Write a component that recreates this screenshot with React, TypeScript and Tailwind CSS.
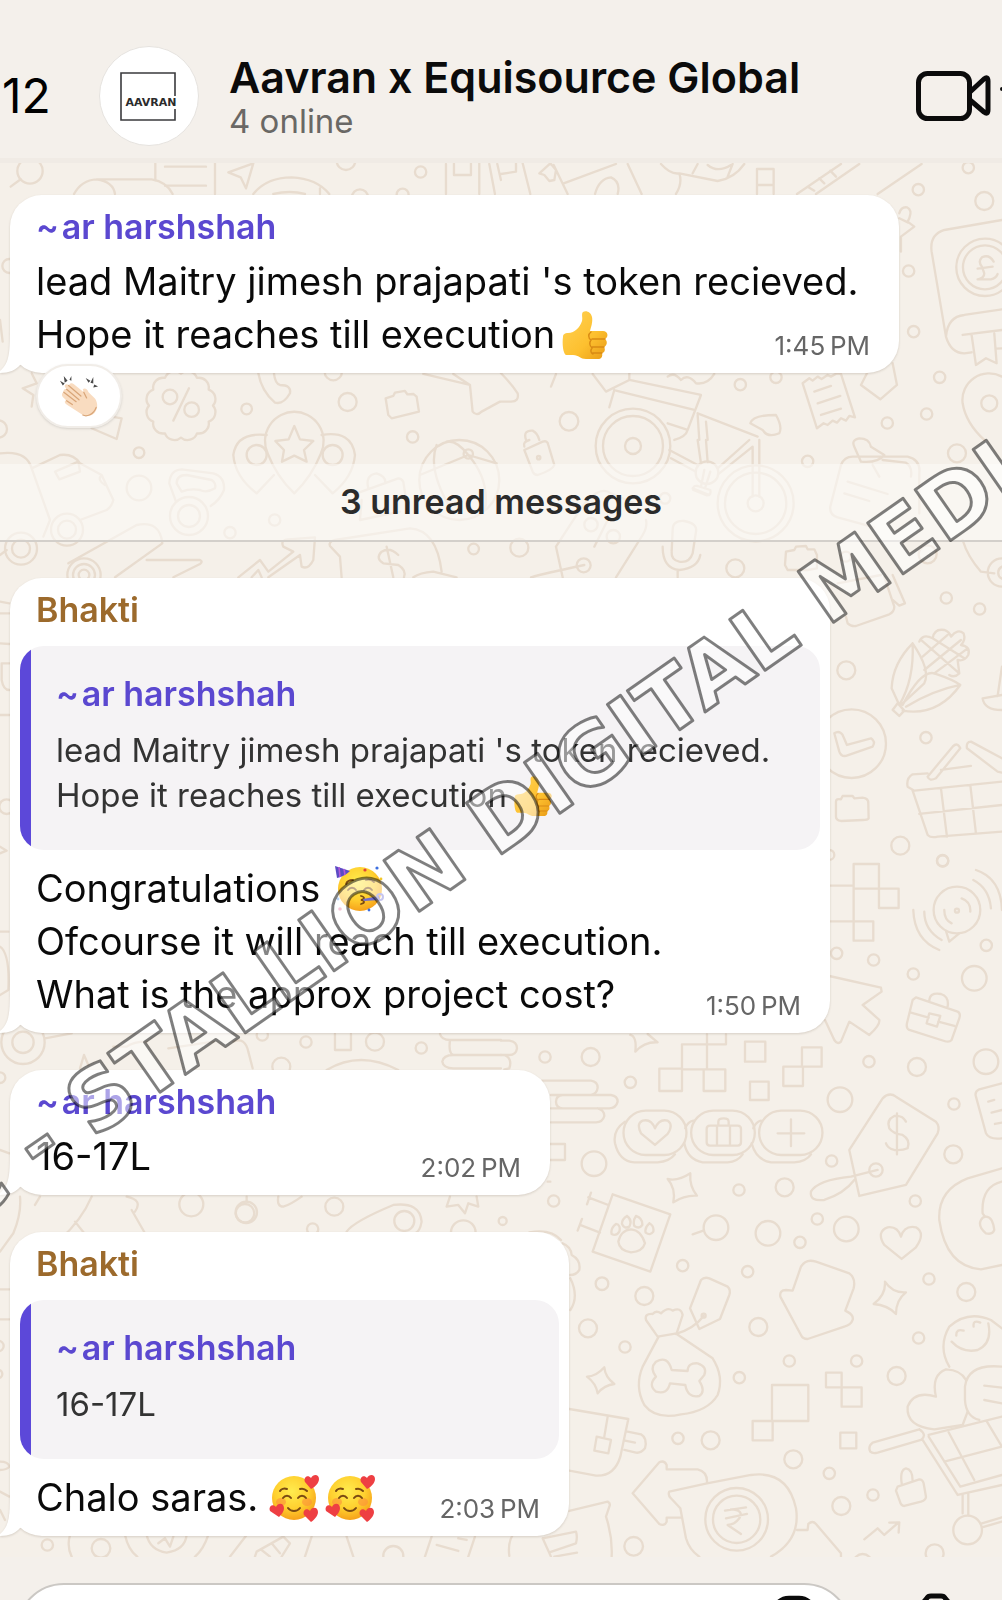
import type { ReactNode } from 'react'

type Circle = [number, number, number]

interface Doodle {
  x: number
  y: number
  circles: Circle[]
  paths: string[]
}

// Wallpaper line art. Each group is drawn at 3x and scaled down in place.
const doodles: Doodle[] = [
  {
    x: 0,
    y: 0,
    circles: [[90, 513, 38], [1262, 516, 17], [1038, 482, 28], [1080, 592, 24], [1208, 584, 18], [28, 798, 21], [510, 1191, 22], [575, 1229, 22], [740, 1227, 16], [1043, 1206, 27], [-5, 1287, 26], [1000, 1115, 26], [1238, 1311, 17]],
    paths: [
      'M62 538L32 560M466 490V540M495 500H618M495 557H618M645 490V582M685 517L760 490L738 565L722 532Z',
      'M222 582Q245 540 290 538H455Q500 545 518 582M290 538Q340 545 345 582M760 582Q800 532 875 532Q950 535 988 582M960 565V582M820 582Q870 570 915 582',
      'M1338 492V582M1362 490V525H1413V490M1438 490V582M1468 492L1485 582M1492 492L1503 540M0 960L8 1025',
      'M95 1120L110 1150L68 1165L100 1185L95 1220M275 1285L350 1317L365 1255L335 1250M520 1262L567 1165',
      'M775 1120Q785 1175 825 1208Q850 1215 870 1180Q875 1155 840 1155Q825 1150 822 1120',
      'M1157 1195L1180 1188L1185 1178L1215 1173L1222 1183L1240 1182L1250 1190L1257 1235L1175 1255L1165 1245Z',
      'M1270 1122L1410 1155L1418 1235Q1430 1250 1445 1235L1500 1205M1360 1122L1410 1155',
    ],
  },
  {
    x: 501,
    y: 0,
    circles: [[1402, 503, 17], [1252, 569, 17], [1450, 603, 27], [1223, 813, 17], [1238, 995, 17], [1316, 1132, 17], [718, 1154, 17], [825, 1132, 17], [204, 1264, 28], [1159, 1269, 17], [1277, 1242, 17], [1452, 802, 86], [1452, 802, 66], [1465, 1210, 24]],
    paths: [
      'M0 522L45 515V490M65 490L88 582M115 520L148 490L165 510L160 540L145 543L130 525ZM158 495L200 582M188 550L345 492M380 492L422 582M282 582Q295 535 330 532Q360 545 350 582',
      'M480 492Q510 525 535 520Q545 550 525 582M535 520L650 543Q700 535 730 492M575 520L590 492M680 530L695 492M620 495Q650 520 690 495M768 582V507H818V582M768 555H818',
      'M888 582L1020 492M945 582L1075 492M920 560L940 572M955 535L970 550M988 512L1005 530M1130 582L1262 492',
      'M1195 640Q1200 620 1218 622Q1235 630 1225 655L1220 665L1240 680L1200 710V755M1195 655L1222 668',
      'M1503 660L1330 690Q1285 705 1292 755L1335 1010Q1350 1060 1390 1060L1412 1057M1484 1046L1503 1045M1335 1010Q1340 950 1390 945L1503 928M1385 1005L1503 990M1412 1005L1425 1095L1455 1075L1487 1090L1480 1000',
      'M1478 785Q1465 762 1443 772Q1430 785 1443 800L1450 820Q1450 835 1430 838H1470Q1485 835 1490 822M1430 806L1475 800',
      'M905 1150L925 1135L935 1142L950 1130L962 1137L980 1125L990 1130L1008 1120L1020 1122L1062 1252L1045 1248L1035 1262L1020 1255L1008 1268L995 1262L980 1275L968 1270L948 1285ZM940 1175L990 1158M950 1210L1018 1188M960 1245L1020 1226',
      'M1098 1120L1080 1155L1138 1198L1188 1155L1175 1090M1503 1130A80 80 0 0 0 1385 1210Q1395 1270 1450 1320',
      'M275 1122L315 1175L385 1140L600 1185L560 1290Q555 1310 520 1320M385 1120V1140M340 1170L325 1222M345 1172L580 1230M500 1270L560 1290M150 1160L165 1122M500 1130Q520 1115 540 1140Q560 1120 585 1150Q620 1155 640 1122',
      'M748 1270Q755 1245 825 1245Q845 1280 835 1300Q800 1315 785 1290ZM590 1245L595 1320M615 1265L620 1320M590 1240L770 1310M75 1320Q65 1290 95 1292Q110 1300 115 1320M0 1120Q30 1150 50 1180Q55 1205 30 1205H0',
    ],
  },
  {
    x: 0,
    y: 440,
    circles: [[417, 38, 16], [417, 144, 37], [824, 240, 17], [690, 278, 17], [770, 45, 30], [998, 45, 30], [1421, 327, 16], [567, 228, 57], [567, 228, 33], [201, 269, 48], [201, 269, 27], [63, 326, 48], [63, 326, 27], [252, 405, 50], [252, 405, 33], [252, 405, 16], [1378, 120, 120], [1405, 42, 14], [20, 1100, 22]],
    paths: [
      'M803 40Q830 110 883 160Q935 110 963 40A88 88 0 1 0 803 40M883 -42L900 -2L940 3L912 30L920 65L883 47L846 65L852 30L826 3L866 -2Z',
      'M800 -15Q710 -25 700 45Q705 110 770 160L822 105M965 -15Q1055 -30 1065 45Q1060 110 998 160L945 105',
      'M0 40Q80 30 95 85L150 240L130 290M95 85L180 45Q220 40 240 70L305 105L340 180Q335 200 320 210L240 240M165 95L235 65L240 95L178 118ZM305 105Q290 120 315 135M0 345L20 330',
      'M528 185L508 130Q510 90 545 88L640 100Q675 110 672 150Q660 180 632 198M530 130Q530 105 560 105L635 120Q650 130 645 145Q620 160 600 150Q570 145 545 155Z',
      'M205 370L410 255Q480 240 487 310L345 412M440 360H600Q610 365 600 372L520 412',
      'M715 412L780 360L805 395L880 335L850 320Q840 300 865 298L945 292L940 360Q925 390 905 380L900 345L805 412M755 412L775 390L785 412',
      'M1025 412L1020 350L990 318Q985 305 1005 300L1230 265Q1310 270 1325 395M1240 412Q1260 398 1300 395L1370 412M1160 320L1180 412M1195 345Q1170 320 1145 335Q1125 355 1150 370L1195 375Q1220 390 1212 412',
      'M1070 160L1195 115Q1205 115 1210 125L1220 190M1085 180L1080 240L1200 215M1105 145Q1095 105 1130 100Q1160 110 1155 130',
      'M1310 15Q1280 90 1360 220M1405 45L1260 105M1405 45L1490 70M1405 45Q1470 120 1455 210M1405 45Q1370 0 1340 5',
      'M0 485L28 490M0 520H28M0 610L28 612M5 670V720Q10 750 28 750M5 670H28M0 825H28M0 1220L20 1232L0 1240',
    ],
  },
  {
    x: 501,
    y: 440,
    circles: [[396, 18, 112], [396, 18, 90], [396, 18, 24], [764, 190, 114], [764, 190, 92], [764, 190, 24], [618, 98, 34], [920, 64, 17], [1368, 40, 27], [492, 175, 16], [270, 254, 20], [337, 290, 20], [55, 323, 27], [248, 376, 21], [703, 385, 27], [113, 53, 5], [1336, 474, 17], [1436, 507, 17], [1036, 691, 27], [1052, 911, 103], [1275, 893, 17], [1198, 1217, 27], [1280, 343, 27], [1325, 1262, 17], [985, 1245, 15], [1035, 350, 15]],
    paths: [
      'M70 20Q65 5 85 0M70 30L125 5Q140 0 142 15L160 75Q155 90 110 105Q100 105 95 95Z',
      'M505 30L590 75M510 55L585 95M590 0L600 70M615 0L620 66M650 85L745 0M655 100L755 20V170M775 0V170M610 90L600 140M628 95L612 145M575 145L625 165M577 150Q575 135 590 138L628 150Q632 165 618 166Z',
      'M1055 50Q1030 50 1020 75L988 200Q985 225 1010 232L1120 262M1055 50H1220Q1260 60 1255 100V220M1040 125L1160 162M1030 160L1105 183M1145 60L1215 68Q1235 80 1230 110M1060 20Q1050 0 1075 -5Q1105 -5 1110 20L1150 45Q1130 70 1080 65ZM1115 75L1135 110',
      'M165 320L230 220M435 240Q440 260 425 285L345 412M165 320L185 412M90 412Q130 400 250 375M280 320L320 240M230 220Q290 130 330 160L400 190',
      'M515 270Q515 240 550 243Q590 250 585 275L575 340Q565 370 535 365Q510 360 512 335ZM485 320Q485 385 535 390Q590 385 598 345M530 390V412',
      'M855 335L880 330L885 320L915 318L920 328L940 328L948 345V385L920 390H860L852 375Z',
      'M1035 530L1040 550Q1050 560 1065 558L1165 523Q1180 515 1180 500L1150 410M1010 430L1140 405M1175 405L1212 490L1195 497L1175 480',
      'M1385 300Q1400 350 1440 395L1480 400M1503 355A42 42 0 0 0 1503 440M1503 380A20 20 0 0 0 1503 416',
      'M1235 610Q1175 670 1172 745L1195 795M1235 610Q1290 690 1270 730L1200 795M1235 610Q1240 720 1195 795M1205 795Q1260 690 1300 700Q1360 720 1378 735Q1310 830 1205 812M1378 735Q1300 750 1215 800M1190 790L1175 810L1195 828L1210 812Z',
      'M1255 605Q1265 580 1295 595Q1300 565 1330 570Q1345 575 1350 590Q1370 565 1388 580Q1395 600 1380 615Q1410 620 1402 645Q1390 665 1370 660L1375 700Q1360 715 1345 705M1260 600L1375 700M1295 595L1390 655M1265 650L1340 585M1270 690L1380 600M1300 700L1400 625',
      'M1445 775L1503 765M1445 775Q1450 810 1503 810M1490 768L1503 680',
      'M1000 880Q1015 870 1025 885L1038 915L1110 895Q1125 905 1115 920L1035 948Q1020 950 1015 935Z',
      'M1005 1085Q1005 1075 1020 1078L1025 1068H1055L1060 1075L1085 1073Q1103 1075 1102 1090L1103 1135Q1100 1140 1085 1140L1020 1143Q1005 1140 1005 1130Z',
      'M1410 978L1320 990M1280 1010L1355 920Q1370 905 1378 925L1305 1015Q1285 1025 1280 1010M1503 955L1410 905Q1395 905 1398 925L1490 995L1503 998M1280 1000L1235 1003Q1215 1015 1220 1040L1240 1052L1503 1025M1235 1052L1280 1185Q1290 1195 1310 1190L1503 1175M1320 1045L1338 1190M1408 1035L1425 1180M1255 1122L1503 1095',
    ],
  },
  {
    x: 501,
    y: 860,
    circles: [[1368, 150, 70], [1368, 152, 6], [1325, 3, 17], [1007, 280, 17], [1118, 300, 17], [1237, 342, 17], [1420, 355, 37], [1456, 256, 17], [1455, 605, 37], [1248, 621, 27], [1104, 605, 17], [132, 591, 17], [269, 591, 27], [388, 667, 17], [1017, 719, 37], [1359, 732, 17], [1357, 883, 27], [279, 911, 37], [992, 903, 17], [714, 990, 17], [851, 982, 27], [158, 1023, 17], [1243, 1023, 17], [1125, 930, 20], [949, 1077, 17], [1036, 1107, 37], [645, 1103, 37], [801, 1120, 37], [5, 1083, 12]],
    paths: [
      'M1058 12H1134V86H1058ZM1134 86H1193V144H1134ZM988 77H1058M1058 86V184M988 184H1058M1058 184H1117V242H1058Z',
      'M1237 150Q1240 240 1315 270M1270 155Q1270 210 1322 240M1417 60Q1465 85 1470 145M1425 30Q1500 55 1503 150M1330 150Q1330 180 1352 190M1382 115Q1410 125 1408 155M1335 213L1345 245L1375 220',
      'M985 348L1140 383L1142 395L1085 435L1135 480Q1138 495 1105 525L1045 485L1020 545Q1010 555 1000 540L972 480',
      'M1245 412L1370 455Q1380 460 1375 475L1352 540Q1345 548 1330 543L1225 510Q1215 505 1218 490L1235 420ZM1285 425Q1285 395 1320 402Q1345 410 1340 440M1230 458L1283 473M1312 485L1360 498M1285 460L1318 468L1308 500L1277 490Z',
      'M388 525Q408 530 403 575Q430 545 470 547L440 522',
      'M543 553H618V628H543ZM475 626H543V693H475ZM608 628H673V693H608ZM618 523V628M618 553H675V523M732 545H793V605H732ZM903 562H962V620H903ZM847 620H906V678H847ZM747 665H803V720H747Z',
      'M0 542H25Q48 545 48 565Q45 585 25 585H0M10 585Q35 595 25 625L10 628M120 662H270Q290 665 290 683Q288 702 270 705M185 705H330Q350 708 350 725Q345 745 325 745H185Q165 743 165 725Q165 707 185 705M290 745Q310 750 310 768Q305 787 285 787H150M150 705H185M150 745H185M148 852H192V900H148M140 965H148',
      'M434 752H490A66 66 0 0 1 490 885H434A66 66 0 0 1 434 752M637 752H695A66 66 0 0 1 695 885H637A66 66 0 0 1 637 752M841 752H898A66 66 0 0 1 898 885H841A66 66 0 0 1 841 752',
      'M372 785Q335 810 342 850Q355 905 400 907H470Q505 905 522 883M577 782Q560 785 553 805M550 850Q560 900 605 907H680Q710 905 725 883M780 782Q765 785 757 805M752 850Q765 900 810 907H880Q915 905 930 883',
      'M462 855L420 820Q405 790 425 782Q450 775 462 805Q475 775 500 782Q518 795 500 822ZM627 797H710Q720 797 720 807V847Q720 857 710 857H627Q617 857 617 847V807Q617 797 627 797M648 797V857M687 797V857M652 797V785Q652 775 668 775Q683 775 683 785V797M830 820H910M870 778V858',
      'M1045 870L1145 715Q1165 695 1185 710L1305 785Q1318 800 1310 820L1215 975L1075 1008ZM1130 930L1050 950Q950 960 930 995Q925 1025 970 1020Q1030 1000 1060 960',
      'M1188 760V883M1215 785Q1205 765 1180 768Q1155 780 1165 805Q1175 820 1205 825Q1230 840 1220 865Q1205 872 1180 870Q1160 865 1155 850',
      'M1503 670L1435 688Q1420 695 1425 710L1455 820Q1465 840 1503 835M1462 725L1480 720M1472 758L1503 750M1482 792L1503 788',
      'M1503 925L1400 955Q1310 990 1315 1080Q1335 1220 1440 1228L1503 1215M1503 965Q1440 980 1445 1060L1452 1070M1455 1070Q1475 1070 1480 1110Q1475 1125 1455 1120Q1430 1100 1440 1080Q1445 1070 1455 1070',
      'M500 957Q530 965 568 940Q565 980 588 1007Q550 1005 517 1027Q525 985 500 957Z',
      'M335 1003L508 1063L448 1235L275 1175ZM258 1033L270 998M262 1012L322 1035M230 1112L243 1077M237 1095L297 1118M390 1108Q420 1110 432 1150Q425 1175 390 1177Q355 1172 352 1145Q360 1110 390 1108M345 1092Q360 1095 355 1115Q345 1130 332 1122Q328 1105 345 1092M378 1068Q395 1080 385 1100Q370 1108 363 1092Q362 1078 378 1068M405 1068Q425 1075 424 1095Q415 1108 400 1098Q395 1082 405 1068M445 1090Q460 1098 457 1115Q448 1128 434 1118Q430 1103 445 1090',
      'M1202 1197L1150 1155Q1125 1115 1160 1102Q1190 1098 1200 1130Q1210 1095 1245 1102Q1275 1120 1245 1162ZM575 1123L607 1112',
    ],
  },
  {
    x: 0,
    y: 860,
    circles: [[69, 547, 65], [69, 547, 32], [0, 653, 16], [787, 525, 17], [918, 546, 17], [1125, 545, 27], [1264, 564, 17], [844, 620, 27], [574, 1033, 36], [739, 1057, 32], [1003, 1040, 27], [1213, 1083, 30], [938, 1107, 17], [1390, 1118, 37]],
    paths: [
      'M0 215H25M0 260Q30 280 25 390L0 405M0 870L28 880M135 535L215 520M240 625L252 585L265 615M340 560H380Q400 545 440 545M700 545Q735 530 745 575L758 625M505 565L640 545M980 630Q1080 570 1195 630M1005 522V570H1053V522',
      'M1320 522Q1325 540 1350 540H1503M1350 540Q1345 580 1360 585H1503M1360 585Q1330 585 1327 605Q1330 625 1360 625H1503',
      'M60 1010Q65 1060 40 1120L0 1175M275 1010Q245 1080 180 1139M225 1085L265 1135M380 1010Q430 1020 405 1055M395 1050L435 1120M105 1035L120 1010M1040 1115Q1060 1085 1180 1035Q1260 1025 1265 1085Q1260 1115 1245 1120M740 1025V1010M835 1010Q830 1040 850 1040Q870 1035 905 1010M1350 1010L1340 1040L1375 1035L1395 1060L1405 1030L1435 1040L1430 1010',
    ],
  },
  {
    x: 0,
    y: 1220,
    circles: [[142, 975, 17], [303, 985, 28], [1180, 1008, 30], [-5, 378, 16], [-5, 462, 12], [735, -20, 28]],
    paths: [
      'M0 208H28M0 298H28M0 725Q25 725 28 740Q20 750 0 750M0 815L28 830M0 870L15 900M210 945Q200 980 215 1010M375 945Q385 990 412 1010M585 1010Q610 990 625 945M440 945Q450 990 500 998Q555 990 560 945M475 970L495 955L510 980L520 950',
      'M690 1010L740 945M765 1010L770 995L850 950L870 970L845 1010M785 990L810 1010M815 970L840 1000M915 1010L935 950M1040 950L1060 1010M1275 1010L1295 950M1310 975L1375 993M1405 1010L1425 950M1375 955L1400 960',
    ],
  },
  {
    x: 501,
    y: 1220,
    circles: [[545, 137, 17], [740, 155, 17], [303, 191, 19], [430, 228, 27], [261, 325, 27], [372, 381, 17], [772, 321, 27], [715, 473, 17], [865, 423, 17], [1067, 423, 17], [1187, 468, 27], [1253, 354, 17], [1284, 177, 17], [1396, 216, 27], [897, 67, 17], [531, 655, 17], [629, 661, 27], [877, 718, 27], [985, 760, 17], [1021, 858, 27], [1116, 825, 17], [707, 898, 94], [707, 898, 71], [398, 979, 28], [1301, 1000, 27], [1400, 930, 43], [608, 287, 6], [1085, 1030, 28]],
    paths: [
      'M185 70Q210 80 212 105Q240 120 235 150Q225 165 208 165M208 175Q235 230 208 270M85 37Q150 25 180 60',
      'M875 212L900 140Q915 115 945 125L1045 160Q1065 175 1058 205L1033 272Q1060 285 1055 300Q1050 315 1030 320L920 357Q905 357 900 345L838 230Q835 210 855 210Z',
      'M567 265L600 180Q610 170 625 175L680 200Q690 210 685 225L657 297L595 327ZM525 342Q580 325 608 288',
      'M470 350L435 300Q430 280 455 282Q465 270 480 280Q500 260 515 272Q540 260 545 285L527 340ZM473 350L425 440Q400 500 430 555Q465 600 540 583Q620 575 650 525Q670 470 635 415L527 342',
      'M512 450L560 453Q560 428 590 430Q620 440 610 465L595 483Q615 515 595 528Q560 535 553 495L507 490Q500 525 465 515Q440 495 465 470Q445 445 465 425Q500 405 512 450Z',
      'M258 470Q285 470 310 442Q312 470 340 492Q310 495 290 520Q285 490 258 470ZM1152 185Q1175 220 1215 217Q1185 240 1185 282Q1160 255 1118 252Q1155 225 1152 185Z',
      'M813 495H922V603H813ZM755 603H815V661H755ZM975 458H1022V502H975ZM1022 502H1082V560H1022ZM1018 638H1066V685H1018Z',
      'M205 567L382 597L358 710Q340 770 285 767L205 752M320 590L310 650M287 650L330 660L322 700L280 692ZM380 635L420 643Q440 655 432 685Q420 700 405 698L370 690M372 662L402 668',
      'M618 788Q620 755 590 748H497V735Q490 720 475 727L395 820L475 912Q490 920 497 905V893H540M618 790L505 815Q500 825 510 835L538 865L555 955Q565 990 595 1010M618 790L750 765Q860 750 885 865Q900 960 810 1010',
      'M672 872L735 862M675 895L738 882M690 868Q730 870 715 895Q700 915 680 915L720 942M888 930H920L922 912Q935 900 945 912L1020 1000V1010',
      'M205 873L320 845Q330 850 325 860L315 890Q335 950 332 1010M125 955L225 935Q230 950 225 970L145 997M125 955L150 1010M160 1010L228 998M35 945Q20 970 25 1008',
      'M1090 958L1130 925L1150 945L1192 908M1165 908L1195 907L1193 938',
      'M1190 800L1255 778Q1265 778 1268 790L1275 830Q1275 840 1260 845L1210 858Q1200 857 1197 845L1185 812ZM1203 795Q1195 750 1215 745Q1235 748 1235 782',
      'M1255 628L1115 668Q1100 680 1108 695Q1115 702 1130 698L1260 660Q1280 645 1255 628M1265 660L1370 825L1503 795M1283 650L1378 800L1503 765M1283 645L1503 590M1330 725L1503 680M1343 637L1420 780M1458 605L1503 680M1385 825V880M1402 822V885M1443 910L1503 892M1443 922L1503 905',
      'M1345 440Q1310 380 1345 320Q1400 270 1470 300L1503 325M1352 365Q1385 400 1430 390Q1475 370 1462 310M1366 347Q1365 325 1388 332M1418 320Q1415 298 1438 308M1503 440Q1400 430 1392 500V540Q1395 590 1435 600M1450 497L1503 503M1450 540L1503 550',
      'M1300 628Q1215 620 1220 560Q1240 510 1305 530Q1290 465 1335 448Q1380 450 1395 480M1400 575L1385 615L1300 628',
    ],
  },
]

// Scalloped outline of the percent badge
function scallop(cx: number, cy: number, r: number, n: number) {
  const pts = Array.from({ length: n + 1 }, (_, i) => {
    const a = (i / n) * Math.PI * 2
    return `${(cx + r * Math.cos(a)).toFixed(1)} ${(cy + r * Math.sin(a)).toFixed(1)}`
  })
  return `M${pts[0]}` + pts.slice(1).map((p) => `A30 30 0 0 1 ${p}`).join('')
}

function Wallpaper() {
  return (
    <svg
      aria-hidden="true"
      className="absolute inset-0 h-full w-full"
      viewBox="0 163 1002 1394"
      preserveAspectRatio="xMinYMin slice"
      fill="none"
      stroke="#e8dccf"
      strokeWidth="7"
      strokeLinecap="round"
      strokeLinejoin="round"
    >
      {doodles.map((d, i) => (
        <g key={i} transform={`translate(${d.x} ${d.y}) scale(0.3333)`}>
          {d.circles.map(([cx, cy, r], j) => (
            <circle key={j} cx={cx} cy={cy} r={r} />
          ))}
          {d.paths.map((p, j) => (
            <path key={j} d={p} />
          ))}
        </g>
      ))}
      <path transform="scale(0.3333)" d={scallop(543, 1217, 96, 12)} />
    </svg>
  )
}

function ThumbsUp({ className }: { className: string }) {
  return (
    <svg role="img" aria-label="thumbs up" viewBox="0 0 48 50" className={className}>
      <defs>
        <linearGradient id="thumb" x1="0" y1="0" x2="1" y2="1">
          <stop offset="0" stopColor="#ffd255" />
          <stop offset=".6" stopColor="#fdc02f" />
          <stop offset="1" stopColor="#e89a16" />
        </linearGradient>
      </defs>
      <path
        d="M2 27C2 24 4 23 7 23C14 23 19 17 21 11C22 8 20 4 22 2C25 0 30 2 31 7C32 12 30 17 29 21H42C47 21 48 27 44 29C47 31 46 36 43 37C45 40 43 43 41 43C42 47 40 49 37 49H25C19 49 18 45 12 45H5C2 44 1 33 2 27Z"
        fill="url(#thumb)"
      />
      <path d="M44 29H31M43 37H31M41 43H32M30 22C27 24 27 28 30 30C28 33 29 36 31 38C29 41 30 43 32 44" fill="none" stroke="#d98a14" strokeWidth="1.4" strokeLinecap="round" />
    </svg>
  )
}

function ClappingHands() {
  return (
    <svg role="img" aria-label="clapping hands" viewBox="0 0 42 44" className="h-11 w-10">
      <g fill="#4b4b4b">
        <path d="M1 6L6 9L4 11ZM5 1L9 6L6 8ZM13 1L13 6L11 5ZM28 3L33 6L31 8ZM36 2L36 9L33 8ZM41 12L36 13L37 10Z" />
      </g>
      <path
        d="M5 18C4 16 6 14 8 15L6 12C6 9 9 9 10 11L11 10C12 8 14 8 16 10L26 18L25 15C27 13 30 15 31 18L38 25C41 30 41 36 37 40C33 43 29 44 25 42L8 31C5 29 6 26 8 27L4 23C2 20 4 18 5 18Z"
        fill="#f9dcc0"
      />
      <path d="M5 18L18 28M8 15L21 26M10 11L23 22M8 27L14 31M26 18L29 24M25 42C29 44 36 42 39 34" fill="none" stroke="#d9a679" strokeWidth="1.3" strokeLinecap="round" />
    </svg>
  )
}

function FaceGradient({ id }: { id: string }) {
  return (
    <defs>
      <radialGradient id={id} cx=".45" cy=".35" r=".65">
        <stop offset="0" stopColor="#ffec4f" />
        <stop offset=".6" stopColor="#ffd02f" />
        <stop offset="1" stopColor="#f6a21b" />
      </radialGradient>
    </defs>
  )
}

function PartyFace() {
  return (
    <svg role="img" aria-label="partying face" viewBox="0 0 50 48" className="ml-1 h-12 w-[50px]">
      <FaceGradient id="party" />
      <circle cx="25" cy="24" r="22" fill="url(#party)" />
      <path d="M0 1L15 6C12 9 7 12 2 13Z" fill="#5b4bc4" />
      <path d="M4 2L5 12M9 4L10 10" stroke="#b15ad8" strokeWidth="1.6" />
      <g fill="none" stroke="#7a4a12" strokeWidth="1.8" strokeLinecap="round">
        <path d="M11 19C12 16 15 15 18 15M31 15C34 14 37 15 39 17M13 25C15 22 19 22 21 25M29 25C31 22 35 22 37 25M26 31C30 32 30 34 26 35C30 36 30 38 26 39" />
      </g>
      <path d="M28 34L44 31L45 35L29 36Z" fill="#6f6ccf" />
      <circle cx="45" cy="32" r="3" fill="none" stroke="#8d8bdc" strokeWidth="2" />
      <circle cx="30" cy="5" r="1.6" fill="#e0453a" />
      <circle cx="42" cy="3" r="1.6" fill="#3d6fe0" />
      <circle cx="5" cy="44" r="1.8" fill="#ef8fb0" />
      <circle cx="3" cy="34" r="1.4" fill="#6fa6ee" />
      <circle cx="34" cy="45" r="1.4" fill="#3d6fe0" />
      <circle cx="46" cy="14" r="1.4" fill="#f3c62a" />
    </svg>
  )
}

function LoveFace() {
  return (
    <svg role="img" aria-label="smiling face with hearts" viewBox="0 0 50 48" className="h-12 w-[50px]">
      <FaceGradient id="love" />
      <circle cx="25" cy="24" r="22" fill="url(#love)" />
      <ellipse cx="12" cy="28" rx="5" ry="4" fill="#fb8f3a" opacity=".6" />
      <ellipse cx="38" cy="28" rx="5" ry="4" fill="#fb8f3a" opacity=".6" />
      <g fill="none" stroke="#7a4a12" strokeWidth="2" strokeLinecap="round">
        <path d="M11 17C12 15 15 14 18 15M31 15C34 14 36 15 38 17M14 24C16 21 20 21 22 24M29 24C31 21 35 21 37 24M19 34C22 38 28 38 31 34" />
      </g>
      <g fill="#ee3f43">
        <path d="M42 15L36 8C34 3 39 0 42 4C44 0 50 0 50 5C50 9 46 13 42 15Z" />
        <path d="M10 43L1 37C-1 32 4 29 7 33C9 28 15 29 15 34C15 38 12 41 10 43Z" />
        <path d="M42 48L35 41C33 36 38 33 41 37C43 32 49 33 49 38C49 42 45 46 42 48Z" />
      </g>
    </svg>
  )
}

function Tail() {
  return (
    <svg aria-hidden="true" viewBox="0 0 40 48" className="absolute bottom-0 -left-2.5 h-12 w-10" fill="#fff">
      <path d="M10 0C10 26 10 38 0 46V48C9 48 16 45 20 40L40 30V0Z" />
    </svg>
  )
}

const Sender = ({ name, className }: { name: string; className: string }) => (
  <p className={`text-[34px] leading-10 font-semibold ${className}`}>{name}</p>
)

interface BubbleProps {
  width: string
  time: string
  sender: ReactNode
  quote?: ReactNode[]
  lines: ReactNode[]
}

function Bubble({ width, time, sender, quote, lines }: BubbleProps) {
  const last = lines.length - 1
  return (
    <article className={`relative ml-2.5 max-w-full rounded-[32px] bg-white py-3 drop-shadow-[0_1px_1px_rgba(90,70,50,0.2)] ${width}`}>
      <Tail />
      <div className="relative">
        <div className="px-[26px]">{sender}</div>
        {quote && (
          <blockquote className="mx-2.5 mt-4 mb-3 flex overflow-hidden rounded-3xl bg-[#f5f3f5]">
            <div className="w-[11px] shrink-0 bg-[#5c48d9]" />
            <div className="px-[25px] pt-7 pb-8">
              <Sender name={'~\u200aar harshshah'} className="text-[#5b48d0]" />
              <div className="mt-3.5 text-[33px] leading-[45px] text-[#333]">
                {quote.map((line, i) => (
                  <p key={i} className="flex h-[45px] items-center whitespace-pre">{line}</p>
                ))}
              </div>
            </div>
          </blockquote>
        )}
        <div className={`pr-[29px] pl-[26px] text-[38px] leading-[53px] text-[#0a0a0a] ${quote ? '' : 'mt-2'}`}>
          {lines.map((line, i) => (
            <div key={i} className="flex h-[53px] items-end justify-between">
              <p className="flex h-[53px] items-center whitespace-pre">{line}</p>
              {i === last && <time className="text-[26px] leading-[30px] whitespace-nowrap text-[#666]">{time}</time>}
            </div>
          ))}
        </div>
      </div>
    </article>
  )
}

function ChatHeader() {
  return (
    <header className="flex items-center border-b-[5px] border-[#f0ebe5] bg-[#f4f0eb] pt-[46px] pb-3">
      <button type="button" className="w-[99px] shrink-0 pl-0.5 text-left text-[48px] leading-[56px] text-black">12</button>
      <div className="flex size-[100px] shrink-0 items-center justify-center rounded-full border border-[#e6e3df] bg-white">
        <svg role="img" aria-label="Aavran" viewBox="0 0 60 50" className="h-[50px] w-[60px]">
          <path d="M56 25V2H2V49H56V38" fill="none" stroke="#3a3a3d" strokeWidth="1.6" />
          <text x="32" y="35" textAnchor="middle" fontSize="11" fontWeight="700" fontFamily="'DejaVu Sans', sans-serif" fill="#2b2b2b">AAVRAN</text>
        </svg>
      </div>
      <div className="ml-[30px] grow">
        <h1 className="text-[43px] leading-[50px] font-semibold text-[#0b0b0b]">Aavran x Equisource Global</h1>
        <p className="text-[33px] leading-[39px] text-[#6a6865]">4 online</p>
      </div>
      <button type="button" aria-label="Video call" className="shrink-0">
        <svg viewBox="0 0 86 50" className="h-[50px] w-[86px]" fill="none" stroke="#0b0b0b" strokeWidth="5" strokeLinejoin="round">
          <rect x="2.5" y="2.5" width="51" height="45" rx="9" />
          <path d="M54 21L68 8Q72 5 72 10V39Q72 44 68 41L54 29" />
          <circle cx="86" cy="18" r="2" fill="#0b0b0b" stroke="none" />
        </svg>
      </button>
    </header>
  )
}

function Composer() {
  return (
    <footer className="flex shrink-0 items-start bg-[#f4f0eb] pt-[26px] pl-4">
      <div className="flex h-24 grow items-start rounded-[48px] border-2 border-[#cbc8c4] bg-white pt-2.5 pr-8">
        <input aria-label="Message" className="h-12 min-w-0 grow bg-transparent pl-8 outline-none" />
        <button type="button" aria-label="Stickers">
          <svg viewBox="0 0 48 48" className="size-12" fill="none" stroke="#0b0b0b" strokeWidth="4.5">
            <rect x="3" y="3" width="42" height="42" rx="16" />
          </svg>
        </button>
      </div>
      <button type="button" aria-label="Camera" className="mt-2.5 mr-9 ml-[54px]">
        <svg viewBox="0 0 60 48" className="h-12 w-[60px]" fill="none" stroke="#0b0b0b" strokeWidth="5" strokeLinejoin="round">
          <path d="M3 18Q3 11 11 11H16L21 5Q22 3 25 3H35Q38 3 39 5L44 11H49Q57 11 57 18V45H3Z" />
        </svg>
      </button>
    </footer>
  )
}

function Watermark() {
  return (
    <svg
      className="pointer-events-none absolute top-0 left-0 h-[1600px] w-full"
      viewBox="0 0 1002 1600"
      preserveAspectRatio="xMinYMin slice"
    >
      <text
        transform="translate(-36 1229) rotate(-34.9)"
        fontFamily="'DejaVu Sans', sans-serif"
        fontWeight="700"
        fontSize="85"
        fill="rgba(255,255,255,0.5)"
        stroke="rgba(0,0,0,0.5)"
        strokeWidth="3"
        strokeLinejoin="round"
      >
        C - STALLION DIGITAL MEDI
      </text>
    </svg>
  )
}

export default function App() {
  const harsh = <Sender name={'~\u200aar harshshah'} className="text-[#5b48d0]" />
  const bhakti = <Sender name="Bhakti" className="text-[#9c6a2c]" />

  return (
    <div className="relative flex h-screen flex-col overflow-hidden bg-[#f4f0eb] font-['Inter',sans-serif]">
      <ChatHeader />

      <main className="relative shrink-0 bg-[#f5f0e9] pt-8 pb-[21px]">
        <Wallpaper />

        <Bubble
          width="w-[889px]"
          time={'1:45\u2009PM'}
          sender={harsh}
          lines={[
            "lead Maitry jimesh prajapati 's token recieved.",
            <>Hope it reaches till execution<ThumbsUp className="ml-1.5 h-[50px] w-12" /></>,
          ]}
        />
        <button type="button" className="relative -mt-[9px] ml-9 flex h-16 w-[86px] items-center justify-center rounded-full border-2 border-[#f1ede8] bg-white shadow-sm">
          <ClappingHands />
        </button>

        {/* Unread divider */}
        <div className="relative mt-9 mb-9 border-b-2 border-[#d3cfca] bg-[#fbfaf6]/60 pt-[18px] pb-[18px] text-center">
          <p className="text-[34px] leading-10 font-semibold text-[#2b2b2b]">3 unread messages</p>
        </div>

        <div className="flex flex-col gap-[37px]">
          <Bubble
            width="w-[820px]"
            time={'1:50\u2009PM'}
            sender={bhakti}
            quote={[
              "lead Maitry jimesh prajapati 's token recieved.",
              <>Hope it reaches till execution<ThumbsUp className="ml-1.5 h-[42px] w-10" /></>,
            ]}
            lines={[<>Congratulations <PartyFace /></>, 'Ofcourse it will reach till execution.', 'What is the approx project cost?']}
          />
          <Bubble width="w-[540px]" time={'2:02\u2009PM'} sender={harsh} lines={['16-17L']} />
          <Bubble
            width="w-[559px]"
            time={'2:03\u2009PM'}
            sender={bhakti}
            quote={['16-17L']}
            lines={[<>Chalo saras. <LoveFace /><span className="w-1.5" /><LoveFace /></>]}
          />
        </div>
      </main>

      <Composer />
      <Watermark />
    </div>
  )
}
